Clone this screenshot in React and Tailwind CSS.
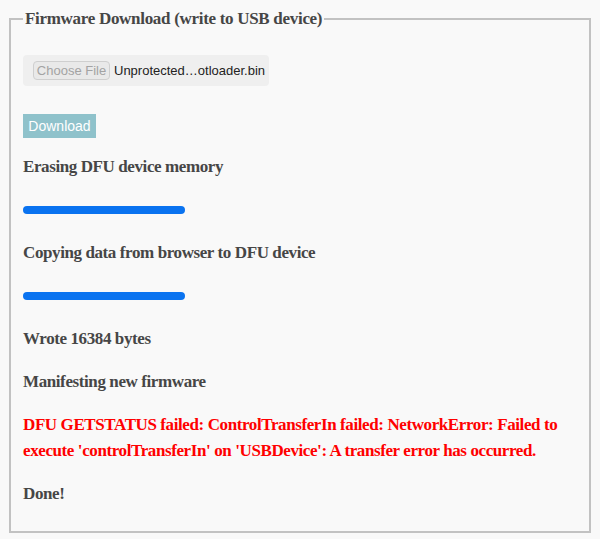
const serif = { fontFamily: '"Liberation Serif", "Times New Roman", serif' };

const Bar = () => (
  <div className="h-[26px] flex items-center">
    <div className="w-[162px] h-2 rounded-full bg-[#0a73f0]" />
  </div>
);

const Line = ({ children, className = '' }) => (
  <div className={`font-bold text-[17px] tracking-[-0.4px] leading-[26px] text-[#464646] ${className}`}>{children}</div>
);

export default function App() {
  return (
    <div className="w-[600px] h-[539px] bg-[#f9f9f9] pt-[9px]" style={serif}>
      <fieldset className="mx-[9px] border-2 border-[#c2c2c2] px-[12px] pb-[20px] h-[524px]">
        <legend className="px-[2px] font-bold text-[17px] tracking-[-0.3px] leading-[20px] text-[#464646]">
          Firmware Download (write to USB device)
        </legend>
        <div className="mt-[26px] w-[246px] h-[31px] rounded bg-[#efefef] flex items-center pl-[10px] font-['Liberation_Sans',sans-serif] whitespace-nowrap">
          <span className="shrink-0 h-[19px] w-[77px] border border-[#cfcfcf] rounded-sm bg-[#e9e9e9] text-[#a3a3a3] text-[13px] leading-[16px] flex items-center justify-center">
            Choose File
          </span>
          <span className="ml-[4px] text-[13px] text-[#222]">Unprotected…otloader.bin</span>
        </div>
        <div className="mt-[28px] w-[73px] h-[24px] bg-[#8fc2cb] text-white text-[14px] flex items-center justify-center font-['Liberation_Sans',sans-serif]">
          Download
        </div>
        <div className="mt-[16px] flex flex-col gap-[17px]">
          <Line>Erasing DFU device memory</Line>
          <Bar />
          <Line>Copying data from browser to DFU device</Line>
          <Bar />
          <Line>Wrote 16384 bytes</Line>
          <Line>Manifesting new firmware</Line>
          <Line className="text-[#ff0000]">
            DFU GETSTATUS failed: ControlTransferIn failed: NetworkError: Failed to execute 'controlTransferIn' on 'USBDevice': A transfer error has occurred.
          </Line>
          <Line>Done!</Line>
        </div>
      </fieldset>
    </div>
  );
}
